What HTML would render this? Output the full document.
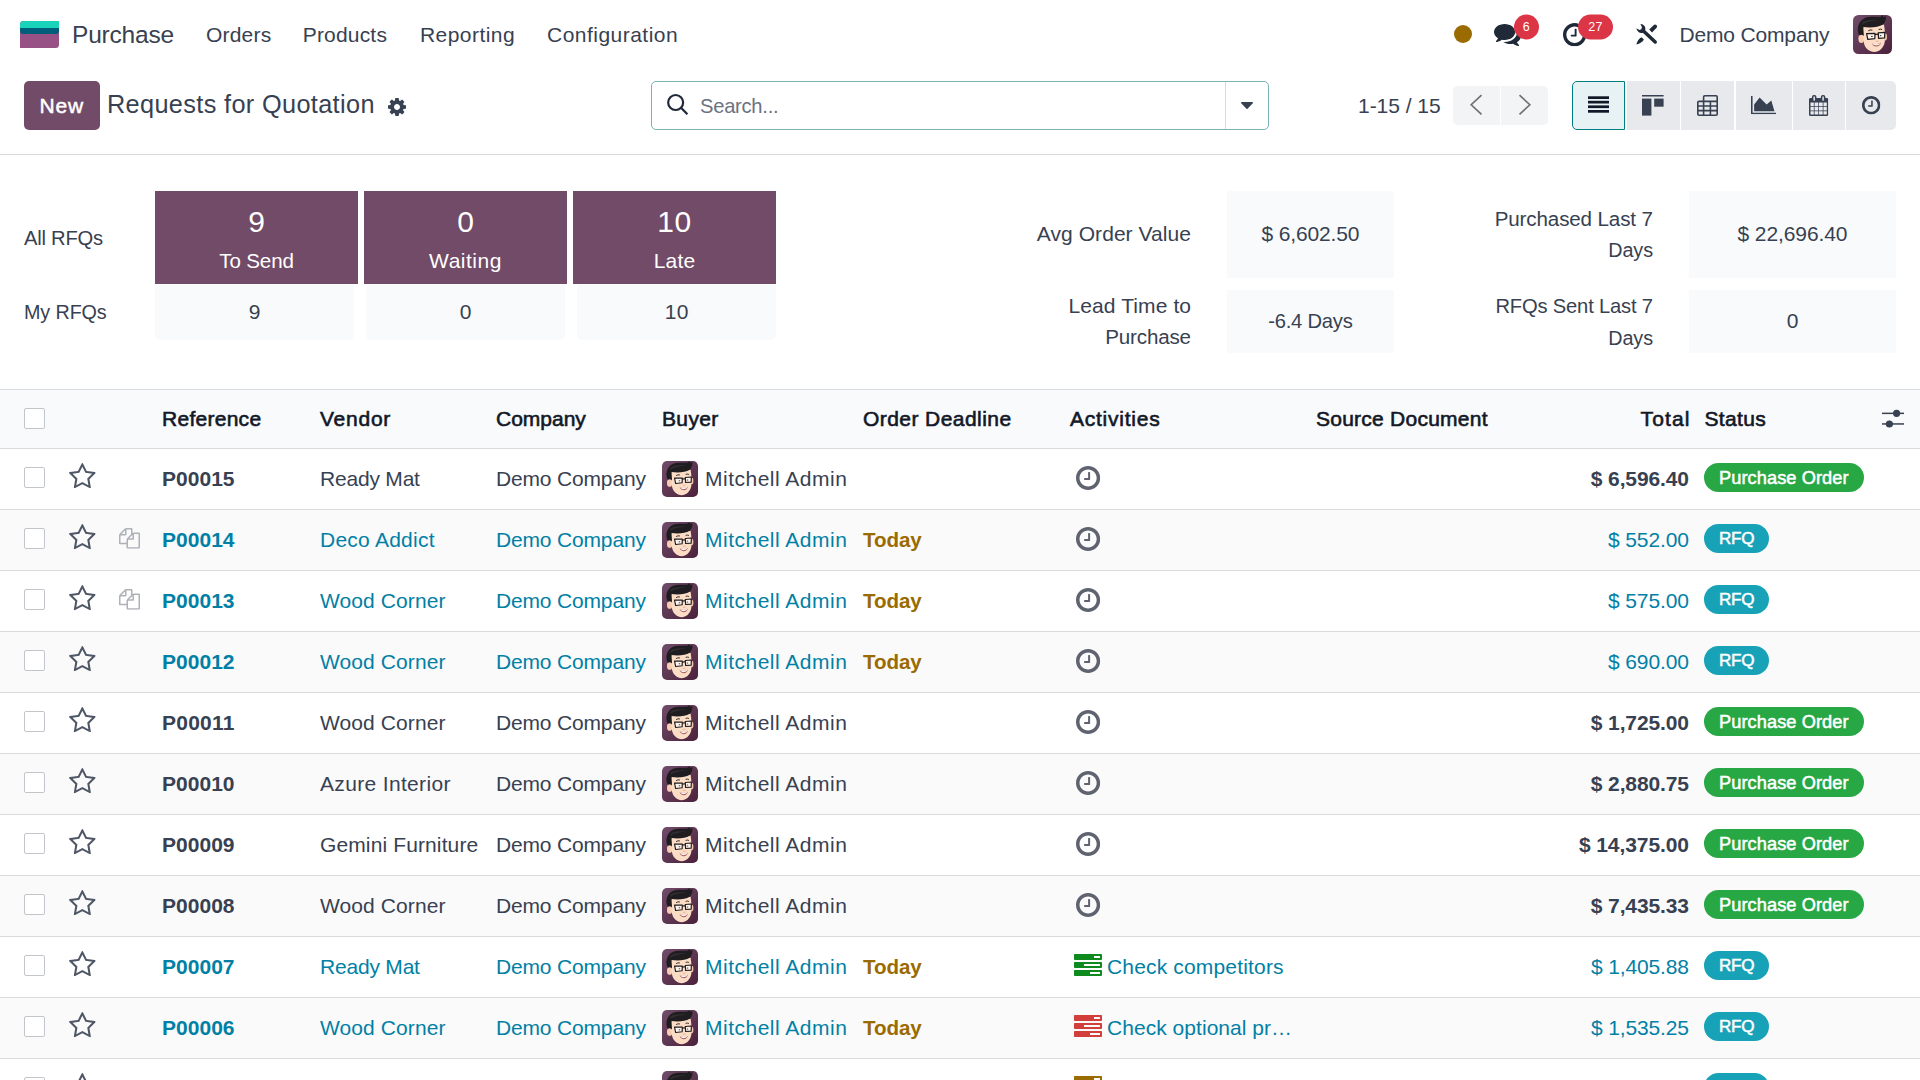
<!DOCTYPE html><html lang="en"><head><meta charset="utf-8"><title>Odoo - Requests for Quotation</title><style>
*{box-sizing:border-box;margin:0;padding:0}
html,body{width:1920px;height:1080px;overflow:hidden;background:#fff}
body{font-family:"Liberation Sans",sans-serif;font-size:21px;color:#374151;position:relative;-webkit-font-smoothing:antialiased}
.abs,.ic,nav *,.cp *,.dash *,.tr>*,.th>*{position:absolute;white-space:nowrap}
.ic{fill:currentColor;overflow:visible}
nav{position:absolute;left:0;top:0;width:1920px;height:69px;background:#fff}
nav .t{line-height:69px;top:0}
.brand{left:72px;font-size:25px;top:0!important}
.badge{background:#dc3545;color:#fff;border-radius:13px;height:25px;top:14px;font-size:12.5px;line-height:25px;transform:translateY(0.5px);text-align:center;font-weight:500}
.cp{position:absolute;left:0;top:69px;width:1920px;height:86px;border-bottom:1px solid #d8dadd}
.btn-new{left:24px;top:12px;width:75.5px;height:48.5px;background:#714b67;border-radius:5px;color:#fff;text-align:center;line-height:49px;font-weight:400;-webkit-text-stroke:0.5px #fff}
.title{left:107px;top:10px;line-height:50px;font-size:25.3px}
.search{left:651px;top:12px;width:618px;height:48.5px;border:1.5px solid #78b2b8;border-radius:5px}
.search .sep{left:572.5px;top:0;width:1px;height:47px;background:#d8dadd}
.search .ph{left:48px;top:0;line-height:48.5px;color:#6b7280}
.pager-t{left:1358px;top:13px;line-height:48px}
.pg{top:17px;height:39px;background:#f3f4f6}
.vb{top:12px;height:49px;background:#e7e9ed}
.dash{position:absolute;left:0;top:155px;width:1920px;height:235px;border-bottom:1px solid #d8dadd;background:#fff}
.card{background:#714b67;color:#fff;top:36px;width:203px;height:93px;text-align:center}
.card .n{left:0;width:203px;top:9px;font-size:30px;line-height:44px}
.card .l{left:0;width:203px;top:52.7px;line-height:34px}
.my{background:#f9fafb;top:130px;width:199px;height:55px;border-radius:0 0 5px 5px;text-align:center;line-height:54px}
.kv{background:#f9fafb;text-align:center}
.kl{text-align:right;line-height:31.2px}
.list{position:absolute;left:0;top:390px;width:1920px}
.th{position:relative;height:59px;background:#f9fafb;border-bottom:1px solid #d8dadd;color:#111827;font-weight:400;line-height:58px}
.th>span{top:0;-webkit-text-stroke:0.6px #111827;}
.tr{position:relative;height:61px;border-bottom:1px solid #d8dadd;line-height:60px}
.tr:nth-child(odd){background:#fafafb}
.tr>span{top:0}
.tr.i,.tr.i a{color:#0180a5}
.cb{left:24px;top:18px;width:21px;height:21px;border:1px solid #c2c5ca;border-radius:2px;background:#fff}
.c-ref{left:162px;font-weight:700}
.c-ven{left:320px}
.c-com{left:496px}
.c-av{left:662px;top:12px;width:36px;height:36px}
.c-buy{left:705px}
.c-dl{left:863px;font-weight:700;color:#9a6b01}
.c-act{left:1107px;color:#0180a5}
.c-tot{right:231px}
.b .c-tot{font-weight:700}
.st{left:1704px;top:14px!important;height:29px;border-radius:15px;color:#fff;font-size:18.2px;font-weight:400;line-height:30.5px;padding:0 15px;-webkit-text-stroke:0.5px #fff;}
.st.po{background:#28a745}
.st.rfq{background:#17a2b8}
</style></head><body>
<svg width="0" height="0" style="position:absolute"><defs><symbol id="fa-star-o" viewBox="0 -1504 1664 1587" preserveAspectRatio="none"><path transform="scale(1,-1)" d="M1137 532 1209 111 832 310 454 111 527 532 221 829 643 891 832 1273 1021 891 1443 829ZM1664 889C1664 919 1632 931 1608 935L1106 1008L881 1463C872 1482 855 1504 832 1504C809 1504 792 1482 783 1463L558 1008L56 935C31 931 0 919 0 889C0 871 13 854 25 841L389 487L303 -13C302 -20 301 -26 301 -33C301 -59 314 -83 343 -83C357 -83 370 -78 383 -71L832 165L1281 -71C1293 -78 1307 -83 1321 -83C1350 -83 1362 -60 1362 -33C1362 -26 1362 -20 1361 -13L1275 487L1638 841C1651 854 1664 871 1664 889Z"/></symbol><symbol id="fa-files-o" viewBox="0 -1536 1792 1792" preserveAspectRatio="none"><path transform="scale(1,-1)" d="M1696 1152H1280C1241 1152 1191 1135 1152 1112V1440C1152 1493 1109 1536 1056 1536H640C587 1536 513 1505 476 1468L68 1060C31 1023 0 949 0 896V224C0 171 43 128 96 128H640V-160C640 -213 683 -256 736 -256H1696C1749 -256 1792 -213 1792 -160V1056C1792 1109 1749 1152 1696 1152ZM1152 939V640H853ZM512 1323V1024H213ZM708 676C671 639 640 565 640 512V256H128V896H544C597 896 640 939 640 992V1408H1024V992ZM1664 -128H768V512H1184C1237 512 1280 555 1280 608V1024H1664Z"/></symbol><symbol id="fa-clock-o" viewBox="0 -1408 1536 1536" preserveAspectRatio="none"><path transform="scale(1,-1)" d="M896 992C896 1010 882 1024 864 1024H800C782 1024 768 1010 768 992V640H544C526 640 512 626 512 608V544C512 526 526 512 544 512H864C882 512 896 526 896 544ZM1312 640C1312 340 1068 96 768 96C468 96 224 340 224 640C224 940 468 1184 768 1184C1068 1184 1312 940 1312 640ZM1536 640C1536 1064 1192 1408 768 1408C344 1408 0 1064 0 640C0 216 344 -128 768 -128C1192 -128 1536 216 1536 640Z"/></symbol><symbol id="fa-comments" viewBox="0 -1280 1792 1408" preserveAspectRatio="none"><path transform="scale(1,-1)" d="M1408 768C1408 1051 1093 1280 704 1280C315 1280 0 1051 0 768C0 606 104 461 266 367C232 284 188 245 149 201C138 188 125 176 129 157C129 157 129 157 129 157C132 140 146 128 161 128C162 128 163 128 164 128C194 132 223 137 250 144C351 170 445 213 528 272C584 262 643 256 704 256C1093 256 1408 485 1408 768ZM1792 512C1792 679 1682 827 1513 920C1528 871 1536 820 1536 768C1536 589 1444 424 1277 302C1122 190 919 128 704 128C675 128 645 130 616 132C741 50 907 0 1088 0C1149 0 1208 6 1264 16C1347 -43 1441 -86 1542 -112C1569 -119 1598 -124 1628 -128C1644 -130 1659 -117 1663 -99C1663 -99 1663 -99 1663 -99C1667 -80 1654 -68 1643 -55C1604 -11 1560 28 1526 111C1688 205 1792 349 1792 512Z"/></symbol><symbol id="fa-search" viewBox="0 -1408 1664 1664" preserveAspectRatio="none"><path transform="scale(1,-1)" d="M1152 704C1152 457 951 256 704 256C457 256 256 457 256 704C256 951 457 1152 704 1152C951 1152 1152 951 1152 704ZM1664 -128C1664 -94 1650 -61 1627 -38L1284 305C1365 422 1408 562 1408 704C1408 1093 1093 1408 704 1408C315 1408 0 1093 0 704C0 315 315 0 704 0C846 0 986 43 1103 124L1446 -218C1469 -242 1502 -256 1536 -256C1606 -256 1664 -198 1664 -128Z"/></symbol><symbol id="fa-cog" viewBox="0 -1408 1536 1536" preserveAspectRatio="none"><path transform="scale(1,-1)" d="M1024 640C1024 499 909 384 768 384C627 384 512 499 512 640C512 781 627 896 768 896C909 896 1024 781 1024 640ZM1536 749C1536 766 1524 782 1507 785L1324 813C1314 846 1300 879 1283 911C1317 958 1354 1002 1388 1048C1393 1055 1396 1062 1396 1071C1396 1079 1394 1087 1389 1093C1347 1152 1277 1214 1224 1263C1217 1269 1208 1273 1199 1273C1190 1273 1181 1270 1175 1264L1033 1157C1004 1172 974 1184 943 1194L915 1378C913 1395 897 1408 879 1408H657C639 1408 625 1396 621 1380C605 1320 599 1255 592 1194C561 1184 530 1171 501 1156L363 1263C355 1269 346 1273 337 1273C303 1273 168 1127 144 1094C139 1087 135 1080 135 1071C135 1062 139 1054 145 1047C182 1002 218 957 252 909C236 879 223 849 213 817L27 789C12 786 0 768 0 753V531C0 514 12 498 29 495L212 468C222 434 236 401 253 369C219 322 182 278 148 232C143 225 140 218 140 209C140 201 142 193 147 186C189 128 259 66 312 18C319 11 328 7 337 7C346 7 355 10 362 16L503 123C532 108 562 96 593 86L621 -98C623 -115 639 -128 657 -128H879C897 -128 911 -116 915 -100C931 -40 937 25 944 86C975 96 1006 109 1035 124L1173 16C1181 11 1190 7 1199 7C1233 7 1368 154 1392 186C1398 193 1401 200 1401 209C1401 218 1397 227 1391 234C1354 279 1318 323 1284 372C1300 401 1312 431 1323 463L1508 491C1524 494 1536 512 1536 527Z"/></symbol><symbol id="fa-caret-down" viewBox="0 -896 1024 576" preserveAspectRatio="none"><path transform="scale(1,-1)" d="M1024 832C1024 867 995 896 960 896H64C29 896 0 867 0 832C0 815 7 799 19 787L467 339C479 327 495 320 512 320C529 320 545 327 557 339L1005 787C1017 799 1024 815 1024 832Z"/></symbol><symbol id="fa-tasks" viewBox="0 -1408 1792 1408" preserveAspectRatio="none"><path transform="scale(1,-1)" d="M1024 128V256H1664V128ZM640 640V768H1664V640ZM1280 1152V1280H1664V1152ZM1792 320C1792 355 1763 384 1728 384H64C29 384 0 355 0 320V64C0 29 29 0 64 0H1728C1763 0 1792 29 1792 64ZM1792 832C1792 867 1763 896 1728 896H64C29 896 0 867 0 832V576C0 541 29 512 64 512H1728C1763 512 1792 541 1792 576ZM1792 1344C1792 1379 1763 1408 1728 1408H64C29 1408 0 1379 0 1344V1088C0 1053 29 1024 64 1024H1728C1763 1024 1792 1053 1792 1088Z"/></symbol><symbol id="fa-area-chart" viewBox="0 -1408 2048 1536" preserveAspectRatio="none"><path transform="scale(1,-1)" d="M2048 0H128V1408H0V-128H2048ZM1664 1024 1280 704 704 1280 256 704V128H1920Z"/></symbol><symbol id="fa-calendar" viewBox="0 -1536 1664 1792" preserveAspectRatio="none"><path transform="scale(1,-1)" d="M128 -128V160H416V-128ZM480 -128V160H800V-128ZM128 224V544H416V224ZM480 224V544H800V224ZM128 608V896H416V608ZM864 -128V160H1184V-128ZM480 608V896H800V608ZM1248 -128V160H1536V-128ZM864 224V544H1184V224ZM512 1088C512 1071 497 1056 480 1056H416C399 1056 384 1071 384 1088V1376C384 1393 399 1408 416 1408H480C497 1408 512 1393 512 1376V1088ZM1248 224V544H1536V224ZM864 608V896H1184V608ZM1248 608V896H1536V608ZM1280 1088C1280 1071 1265 1056 1248 1056H1184C1167 1056 1152 1071 1152 1088V1376C1152 1393 1167 1408 1184 1408H1248C1265 1408 1280 1393 1280 1376V1088ZM1664 1152C1664 1222 1606 1280 1536 1280H1408V1376C1408 1464 1336 1536 1248 1536H1184C1096 1536 1024 1464 1024 1376V1280H640V1376C640 1464 568 1536 480 1536H416C328 1536 256 1464 256 1376V1280H128C58 1280 0 1222 0 1152V-128C0 -198 58 -256 128 -256H1536C1606 -256 1664 -198 1664 -128Z"/></symbol><symbol id="av" viewBox="0 0 39 39">
<defs><linearGradient id="avg" x1="0" y1="0" x2="1" y2="1"><stop offset="0" stop-color="#714d6b"/><stop offset="1" stop-color="#4b213b"/></linearGradient>
<clipPath id="avc"><rect width="39" height="39" rx="5.5"/></clipPath></defs>
<g clip-path="url(#avc)"><rect width="39" height="39" fill="url(#avg)"/>
<ellipse cx="8.3" cy="23.8" rx="2.9" ry="4.2" fill="#f6cdb3"/>
<ellipse cx="32.3" cy="21.8" rx="1.7" ry="3.6" fill="#f1c3a8"/>
<path d="M9.8 12 L31 9.5 C31.8 15 32.6 22 31.7 27 C30.8 33 26 37 21.3 37 C16.4 37 12 33.5 10.9 28 C10 23 9.8 17 9.8 12Z" fill="#fbdcc5"/>
<path d="M5 16.5 C4.2 11.5 6.2 6.2 11 3.4 C14.5 1.6 20 1.6 27.2 2 L29.6 0.2 L30.2 2 L33 1.4 C33.2 4.5 32 7.6 30 9.6 C25.5 12.4 17 13 10.4 12 C10.2 15.5 11 18.8 10.8 21 C9.6 19.6 7.8 19.2 6.4 20.4 C5.6 19.4 5.2 18 5 16.5Z" fill="#1f1d20"/><path d="M9 7.4 C13 4.6 20 4.2 27 5.2 C21 5.4 14 6.2 9.6 9.4Z" fill="#39363a" opacity=".7"/>
<path d="M15.6 15.6 Q17.3 14.4 19 15" stroke="#2a2326" stroke-width="1" fill="none" stroke-linecap="round"/>
<path d="M26 14.4 Q27.4 13.6 28.8 14.4" stroke="#2a2326" stroke-width="1" fill="none" stroke-linecap="round"/>
<path d="M13.6 18.6 L22 18.4 L21.8 23.6 L14.8 24.4Z" fill="#fff4ec" stroke="#1d1b1e" stroke-width="1.25" stroke-linejoin="round"/>
<path d="M25.2 17.9 L31.8 17.3 L31.6 22.9 L25.6 23.3Z" fill="#fff4ec" stroke="#1d1b1e" stroke-width="1.25" stroke-linejoin="round"/>
<path d="M22 19.6 L25.2 19.2" stroke="#1d1b1e" stroke-width="1.3"/>
<ellipse cx="18.9" cy="21.4" rx="0.9" ry="0.6" fill="#3a3034"/><ellipse cx="27.6" cy="20.6" rx="0.9" ry="0.6" fill="#3a3034"/>
<path d="M22.8 26.2 Q24 26.8 25.6 26" stroke="#e7a995" stroke-width="0.9" fill="none"/>
<path d="M19 28.4 Q23.5 30.2 28 27.8 Q26.6 31.8 23 31.6 Q20.2 31.4 19 28.4Z" fill="#a8565a"/><path d="M19.4 28.5 Q23.5 30.2 27.7 28 Q26.8 30.3 23.2 30.5 Q20.6 30.4 19.4 28.5Z" fill="#fff"/>
</g></symbol></defs></svg>
<nav>
<div class="appicon" style="left:20px;top:21px;width:39px;height:27px;border-radius:3.5px 0 3.5px 0;overflow:hidden;background:#985184"><i style="left:0;top:0;width:39px;height:7px;background:#1ad3bb"></i><i style="left:0;top:6.5px;width:39px;height:6.5px;background:#005e7a;border-radius:0 0 3px 3px"></i></div>
<span class="t brand" style="font-size:24.50px;letter-spacing:-0.205px;margin-right:0.205px;">Purchase</span>
<span class="t" style="letter-spacing:0.200px;margin-right:-0.200px;left:206px">Orders</span>
<span class="t" style="letter-spacing:0.190px;margin-right:-0.190px;left:302.7px">Products</span>
<span class="t" style="letter-spacing:0.441px;margin-right:-0.441px;left:420px">Reporting</span>
<span class="t" style="letter-spacing:0.479px;margin-right:-0.479px;left:547px">Configuration</span>
<i style="left:1454px;top:25.3px;width:18px;height:18px;border-radius:50%;background:#9a6b01"></i>
<svg class="ic" style="left:1494.4px;top:24px;width:27px;height:22px;color:#1f2937;"><use href="#fa-comments"/></svg>
<span class="badge" style="left:1513.5px;width:25.5px">6</span>
<svg class="ic" style="left:1563px;top:22.6px;width:23.3px;height:23.3px;color:#1f2937;"><use href="#fa-clock-o"/></svg>
<span class="badge" style="letter-spacing:0.203px;margin-right:-0.203px;left:1578px;width:35px">27</span>
<svg class="ic" style="left:1636px;top:24px;width:22px;height:21px;color:#1f2937" viewBox="0 0 22 21"><path d="M7.2 6.8 L19.2 18" stroke="currentColor" stroke-width="3.5" stroke-linecap="round" fill="none"/><path d="M4.4 0.1 A4.9 4.9 0 0 1 9.2 6.6 L6.8 8.8 A4.9 4.9 0 0 1 0.5 4.2 L3.4 6 L5.4 5.2 L5.9 3 Z"/><path d="M13.2 5.6 L17.6 1.2 A1.9 1.9 0 0 1 20.6 3.8 L16 8.6Z"/><path d="M5.4 13.2 L7.9 15.6 C6.6 18 4 19.6 0.4 20.6 C1 17.4 2.8 14.6 5.4 13.2Z"/></svg>
<span class="t" style="letter-spacing:-0.165px;margin-right:0.165px;left:1679.5px">Demo Company</span>
<svg class="ic" style="left:1853px;top:15px;width:39px;height:39px"><use href="#av"/></svg>
</nav>
<div class="cp">
<span class="btn-new" style="letter-spacing:0.806px;margin-right:-0.806px;">New</span>
<span class="title" style="letter-spacing:0.348px;margin-right:-0.348px;">Requests for Quotation</span>
<svg class="ic" style="left:388px;top:28.5px;width:18px;height:18px;color:#374151;"><use href="#fa-cog"/></svg>
<div class="search"><svg class="ic" style="left:14.5px;top:12.3px;width:21.5px;height:21px" viewBox="0 0 21.5 21"><circle cx="8.65" cy="8.5" r="7.5" fill="none" stroke="#1f2937" stroke-width="2.2"/><path d="M14 13.8 L20.4 20.2" stroke="#1f2937" stroke-width="2.3" fill="none"/></svg><span class="ph" style="font-size:20.16px;letter-spacing:-0.260px;margin-right:0.260px;">Search...</span><i class="sep"></i><svg class="ic" style="left:588.5px;top:20px;width:12px;height:7px;color:#374151;"><use href="#fa-caret-down"/></svg></div>
<span class="pager-t" style="letter-spacing:-0.033px;margin-right:0.033px;">1-15 / 15</span>
<div class="pg" style="left:1453px;width:47px;border-radius:5px 0 0 5px"><svg class="ic" style="left:16px;top:8.2px;width:14px;height:21.5px" viewBox="0 0 14 21.5"><path d="M12.5 1.1 L2.2 10.75 L12.5 20.4" fill="none" stroke="#717171" stroke-width="1.7"/></svg></div>
<div class="pg" style="left:1501px;width:47px;border-radius:0 5px 5px 0"><svg class="ic" style="left:17px;top:8.2px;width:14px;height:21.5px" viewBox="0 0 14 21.5"><path d="M1.5 1.1 L11.8 10.75 L1.5 20.4" fill="none" stroke="#717171" stroke-width="1.7"/></svg></div>
<div class="vb" style="left:1572px;width:53px;background:#e6f2f3;border:1.5px solid #017e84;border-radius:5px 0 0 5px"><svg class="ic" style="left:14.5px;top:14px;width:21px;height:17px;color:#111827" viewBox="0 0 21 17"><rect y="0.3" width="21" height="2.7"/><rect y="4.8" width="21" height="2.7"/><rect y="9.4" width="21" height="2.7"/><rect y="14" width="21" height="2.7"/></svg></div>
<div class="vb" style="left:1627px;width:53px"><svg class="ic" style="left:15.3px;top:14px;width:22px;height:21px;color:#374151" viewBox="0 0 22 21"><rect y="0" width="21.6" height="1.5"/><rect y="3.6" width="9.4" height="17"/><rect x="12.2" y="3.6" width="9.4" height="8.1"/></svg></div>
<div class="vb" style="left:1681px;width:53px"><svg class="ic" style="left:16px;top:14px;width:21px;height:21px;color:#374151" viewBox="0 0 21 21"><g fill="none" stroke="currentColor" stroke-width="1.6"><path d="M6.6 6.4 V2 Q6.6 0.8 7.8 0.8 H19 Q20.2 0.8 20.2 2 V19 Q20.2 20.2 19 20.2 H2 Q0.8 20.2 0.8 19 V7.6 Q0.8 6.4 2 6.4 H20.2"/><path d="M0.8 11 H20.2 M0.8 15.6 H20.2 M6.6 6.4 V20.2 M13.4 6.4 V20.2"/></g></svg></div>
<div class="vb" style="left:1736px;width:56px"><svg class="ic" style="left:15px;top:15.3px;width:25px;height:18.3px;color:#374151;"><use href="#fa-area-chart"/></svg></div>
<div class="vb" style="left:1793px;width:52px"><svg class="ic" style="left:16.2px;top:14px;width:19.3px;height:21px;color:#374151;"><use href="#fa-calendar"/></svg></div>
<div class="vb" style="left:1846px;width:50px;border-radius:0 5px 5px 0"><svg class="ic" style="left:15.7px;top:15.3px;width:18.4px;height:18.4px;color:#374151;"><use href="#fa-clock-o"/></svg></div>
</div>
<div class="dash">
<span style="font-size:20.16px;letter-spacing:-0.230px;margin-right:0.230px;left:24px;top:66px;line-height:34px">All RFQs</span>
<span style="font-size:19.74px;letter-spacing:-0.099px;margin-right:0.099px;left:24px;top:140px;line-height:34px">My RFQs</span>
<div class="card" style="left:155px"><span class="n">9</span><span class="l" style="font-size:20.58px;letter-spacing:-0.146px;margin-right:0.146px;">To Send</span></div>
<div class="my" style="left:155px"><span style="position:static">9</span></div>
<div class="card" style="left:364px"><span class="n">0</span><span class="l" style="letter-spacing:0.513px;margin-right:-0.513px;">Waiting</span></div>
<div class="my" style="left:366px"><span style="position:static">0</span></div>
<div class="card" style="left:573px"><span class="n" style="letter-spacing:0.469px;margin-right:-0.469px;">10</span><span class="l" style="letter-spacing:0.146px;margin-right:-0.146px;">Late</span></div>
<div class="my" style="left:577px"><span style="letter-spacing:0.344px;margin-right:-0.344px;position:static">10</span></div>
<div class="kl" style="right:729px;top:63px"><span style="letter-spacing:0.064px;margin-right:-0.064px;position:static">Avg Order Value</span></div>
<div class="kv" style="left:1227px;top:36px;width:167px;height:87px;line-height:86px"><span style="letter-spacing:-0.134px;margin-right:0.134px;position:static">$ 6,602.50</span></div>
<div class="kl" style="right:729px;top:135px"><span style="letter-spacing:0.094px;margin-right:-0.094px;position:static">Lead Time to</span><br><span style="font-size:20.58px;letter-spacing:-0.170px;margin-right:0.170px;position:static">Purchase</span></div>
<div class="kv" style="left:1227px;top:135px;width:167px;height:63px;line-height:62px"><span style="font-size:20.16px;letter-spacing:-0.211px;margin-right:0.211px;position:static">-6.4 Days</span></div>
<div class="kl" style="right:267px;top:48px"><span style="font-size:20.58px;letter-spacing:-0.119px;margin-right:0.119px;position:static">Purchased Last 7</span><br><span style="font-size:19.74px;letter-spacing:-0.042px;margin-right:0.042px;position:static">Days</span></div>
<div class="kv" style="left:1689px;top:36px;width:207px;height:87px;line-height:86px"><span style="letter-spacing:-0.103px;margin-right:0.103px;position:static">$ 22,696.40</span></div>
<div class="kl" style="right:267px;top:135px"><span style="font-size:20.16px;letter-spacing:-0.178px;margin-right:0.178px;position:static">RFQs Sent Last 7</span><br><span style="font-size:19.74px;letter-spacing:-0.042px;margin-right:0.042px;position:static">Days</span></div>
<div class="kv" style="left:1689px;top:135px;width:207px;height:63px;line-height:62px"><span style="position:static">0</span></div>
</div>
<div class="list">
<div class="th"><i class="cb"></i>
<span style="letter-spacing:0.272px;margin-right:-0.272px;left:162px">Reference</span>
<span style="letter-spacing:0.756px;margin-right:-0.756px;left:320px">Vendor</span>
<span style="letter-spacing:-0.005px;margin-right:0.005px;left:496px">Company</span>
<span style="letter-spacing:0.357px;margin-right:-0.357px;left:662px">Buyer</span>
<span style="letter-spacing:0.435px;margin-right:-0.435px;left:863px">Order Deadline</span>
<span style="letter-spacing:0.758px;margin-right:-0.758px;left:1070px">Activities</span>
<span style="letter-spacing:0.245px;margin-right:-0.245px;left:1316px">Source Document</span>
<span style="letter-spacing:1.139px;margin-right:-1.139px;right:230.5px">Total</span>
<span style="letter-spacing:0.365px;margin-right:-0.365px;left:1704.5px">Status</span>
<svg class="ic" style="left:1882px;top:19px;width:22px;height:19px;color:#374151" viewBox="0 0 22 19"><rect y="3.6" width="22" height="1.5"/><rect y="14.2" width="22" height="1.5"/><circle cx="14.6" cy="4.3" r="3.6"/><circle cx="7.4" cy="15" r="3.6"/></svg>
</div>
<div class="tr b"><i class="cb"></i>
<svg class="ic" style="left:69.1px;top:14px;width:26.7px;height:25.3px;color:#4f5766;"><use href="#fa-star-o"/></svg>
<span class="c-ref" style="letter-spacing:0.022px;margin-right:-0.022px;">P00015</span>
<span class="c-ven" style="letter-spacing:-0.199px;margin-right:0.199px;">Ready Mat</span>
<span class="c-com" style="letter-spacing:-0.165px;margin-right:0.165px;">Demo Company</span>
<svg class="ic c-av"><use href="#av"/></svg>
<span class="c-buy" style="letter-spacing:0.498px;margin-right:-0.498px;">Mitchell Admin</span>
<svg class="ic" style="left:1076.1px;top:17.1px;width:24.2px;height:24px;color:#5f6370;"><use href="#fa-clock-o"/></svg>
<span class="c-tot" style="letter-spacing:-0.116px;margin-right:0.116px;">$ 6,596.40</span>
<span class="st po" style="letter-spacing:0.088px;margin-right:-0.088px;">Purchase Order</span>
</div>
<div class="tr i"><i class="cb"></i>
<svg class="ic" style="left:69.1px;top:14px;width:26.7px;height:25.3px;color:#4f5766;"><use href="#fa-star-o"/></svg>
<svg class="ic" style="left:118.8px;top:18.1px;width:21px;height:20.7px;color:#aeb1b8;"><use href="#fa-files-o"/></svg>
<span class="c-ref" style="letter-spacing:0.022px;margin-right:-0.022px;">P00014</span>
<span class="c-ven" style="letter-spacing:0.247px;margin-right:-0.247px;">Deco Addict</span>
<span class="c-com" style="letter-spacing:-0.165px;margin-right:0.165px;">Demo Company</span>
<svg class="ic c-av"><use href="#av"/></svg>
<span class="c-buy" style="letter-spacing:0.498px;margin-right:-0.498px;">Mitchell Admin</span>
<span class="c-dl" style="font-size:20.58px;letter-spacing:-0.086px;margin-right:0.086px;">Today</span>
<svg class="ic" style="left:1076.1px;top:17.1px;width:24.2px;height:24px;color:#5f6370;"><use href="#fa-clock-o"/></svg>
<span class="c-tot" style="letter-spacing:-0.100px;margin-right:0.100px;">$ 552.00</span>
<span class="st rfq" style="font-size:17.11px;letter-spacing:-0.242px;margin-right:0.242px;">RFQ</span>
</div>
<div class="tr i"><i class="cb"></i>
<svg class="ic" style="left:69.1px;top:14px;width:26.7px;height:25.3px;color:#4f5766;"><use href="#fa-star-o"/></svg>
<svg class="ic" style="left:118.8px;top:18.1px;width:21px;height:20.7px;color:#aeb1b8;"><use href="#fa-files-o"/></svg>
<span class="c-ref" style="letter-spacing:0.022px;margin-right:-0.022px;">P00013</span>
<span class="c-ven" style="letter-spacing:0.091px;margin-right:-0.091px;">Wood Corner</span>
<span class="c-com" style="letter-spacing:-0.165px;margin-right:0.165px;">Demo Company</span>
<svg class="ic c-av"><use href="#av"/></svg>
<span class="c-buy" style="letter-spacing:0.498px;margin-right:-0.498px;">Mitchell Admin</span>
<span class="c-dl" style="font-size:20.58px;letter-spacing:-0.086px;margin-right:0.086px;">Today</span>
<svg class="ic" style="left:1076.1px;top:17.1px;width:24.2px;height:24px;color:#5f6370;"><use href="#fa-clock-o"/></svg>
<span class="c-tot" style="letter-spacing:-0.100px;margin-right:0.100px;">$ 575.00</span>
<span class="st rfq" style="font-size:17.11px;letter-spacing:-0.242px;margin-right:0.242px;">RFQ</span>
</div>
<div class="tr i"><i class="cb"></i>
<svg class="ic" style="left:69.1px;top:14px;width:26.7px;height:25.3px;color:#4f5766;"><use href="#fa-star-o"/></svg>
<span class="c-ref" style="letter-spacing:0.022px;margin-right:-0.022px;">P00012</span>
<span class="c-ven" style="letter-spacing:0.091px;margin-right:-0.091px;">Wood Corner</span>
<span class="c-com" style="letter-spacing:-0.165px;margin-right:0.165px;">Demo Company</span>
<svg class="ic c-av"><use href="#av"/></svg>
<span class="c-buy" style="letter-spacing:0.498px;margin-right:-0.498px;">Mitchell Admin</span>
<span class="c-dl" style="font-size:20.58px;letter-spacing:-0.086px;margin-right:0.086px;">Today</span>
<svg class="ic" style="left:1076.1px;top:17.1px;width:24.2px;height:24px;color:#5f6370;"><use href="#fa-clock-o"/></svg>
<span class="c-tot" style="letter-spacing:-0.100px;margin-right:0.100px;">$ 690.00</span>
<span class="st rfq" style="font-size:17.11px;letter-spacing:-0.242px;margin-right:0.242px;">RFQ</span>
</div>
<div class="tr b"><i class="cb"></i>
<svg class="ic" style="left:69.1px;top:14px;width:26.7px;height:25.3px;color:#4f5766;"><use href="#fa-star-o"/></svg>
<span class="c-ref" style="letter-spacing:0.253px;margin-right:-0.253px;">P00011</span>
<span class="c-ven" style="letter-spacing:0.091px;margin-right:-0.091px;">Wood Corner</span>
<span class="c-com" style="letter-spacing:-0.165px;margin-right:0.165px;">Demo Company</span>
<svg class="ic c-av"><use href="#av"/></svg>
<span class="c-buy" style="letter-spacing:0.498px;margin-right:-0.498px;">Mitchell Admin</span>
<svg class="ic" style="left:1076.1px;top:17.1px;width:24.2px;height:24px;color:#5f6370;"><use href="#fa-clock-o"/></svg>
<span class="c-tot" style="letter-spacing:-0.116px;margin-right:0.116px;">$ 1,725.00</span>
<span class="st po" style="letter-spacing:0.088px;margin-right:-0.088px;">Purchase Order</span>
</div>
<div class="tr b"><i class="cb"></i>
<svg class="ic" style="left:69.1px;top:14px;width:26.7px;height:25.3px;color:#4f5766;"><use href="#fa-star-o"/></svg>
<span class="c-ref" style="letter-spacing:0.022px;margin-right:-0.022px;">P00010</span>
<span class="c-ven" style="letter-spacing:0.337px;margin-right:-0.337px;">Azure Interior</span>
<span class="c-com" style="letter-spacing:-0.165px;margin-right:0.165px;">Demo Company</span>
<svg class="ic c-av"><use href="#av"/></svg>
<span class="c-buy" style="letter-spacing:0.498px;margin-right:-0.498px;">Mitchell Admin</span>
<svg class="ic" style="left:1076.1px;top:17.1px;width:24.2px;height:24px;color:#5f6370;"><use href="#fa-clock-o"/></svg>
<span class="c-tot" style="letter-spacing:-0.116px;margin-right:0.116px;">$ 2,880.75</span>
<span class="st po" style="letter-spacing:0.088px;margin-right:-0.088px;">Purchase Order</span>
</div>
<div class="tr b"><i class="cb"></i>
<svg class="ic" style="left:69.1px;top:14px;width:26.7px;height:25.3px;color:#4f5766;"><use href="#fa-star-o"/></svg>
<span class="c-ref" style="letter-spacing:0.022px;margin-right:-0.022px;">P00009</span>
<span class="c-ven" style="letter-spacing:0.121px;margin-right:-0.121px;">Gemini Furniture</span>
<span class="c-com" style="letter-spacing:-0.165px;margin-right:0.165px;">Demo Company</span>
<svg class="ic c-av"><use href="#av"/></svg>
<span class="c-buy" style="letter-spacing:0.498px;margin-right:-0.498px;">Mitchell Admin</span>
<svg class="ic" style="left:1076.1px;top:17.1px;width:24.2px;height:24px;color:#5f6370;"><use href="#fa-clock-o"/></svg>
<span class="c-tot" style="letter-spacing:-0.087px;margin-right:0.087px;">$ 14,375.00</span>
<span class="st po" style="letter-spacing:0.088px;margin-right:-0.088px;">Purchase Order</span>
</div>
<div class="tr b"><i class="cb"></i>
<svg class="ic" style="left:69.1px;top:14px;width:26.7px;height:25.3px;color:#4f5766;"><use href="#fa-star-o"/></svg>
<span class="c-ref" style="letter-spacing:0.022px;margin-right:-0.022px;">P00008</span>
<span class="c-ven" style="letter-spacing:0.091px;margin-right:-0.091px;">Wood Corner</span>
<span class="c-com" style="letter-spacing:-0.165px;margin-right:0.165px;">Demo Company</span>
<svg class="ic c-av"><use href="#av"/></svg>
<span class="c-buy" style="letter-spacing:0.498px;margin-right:-0.498px;">Mitchell Admin</span>
<svg class="ic" style="left:1076.1px;top:17.1px;width:24.2px;height:24px;color:#5f6370;"><use href="#fa-clock-o"/></svg>
<span class="c-tot" style="letter-spacing:-0.116px;margin-right:0.116px;">$ 7,435.33</span>
<span class="st po" style="letter-spacing:0.088px;margin-right:-0.088px;">Purchase Order</span>
</div>
<div class="tr i"><i class="cb"></i>
<svg class="ic" style="left:69.1px;top:14px;width:26.7px;height:25.3px;color:#4f5766;"><use href="#fa-star-o"/></svg>
<span class="c-ref" style="letter-spacing:0.022px;margin-right:-0.022px;">P00007</span>
<span class="c-ven" style="letter-spacing:-0.199px;margin-right:0.199px;">Ready Mat</span>
<span class="c-com" style="letter-spacing:-0.165px;margin-right:0.165px;">Demo Company</span>
<svg class="ic c-av"><use href="#av"/></svg>
<span class="c-buy" style="letter-spacing:0.498px;margin-right:-0.498px;">Mitchell Admin</span>
<span class="c-dl" style="font-size:20.58px;letter-spacing:-0.086px;margin-right:0.086px;">Today</span>
<svg class="ic" style="left:1074px;top:17px;width:28px;height:22px;color:#0f8a1f;"><use href="#fa-tasks"/></svg>
<span class="c-act" style="letter-spacing:0.165px;margin-right:-0.165px;">Check competitors</span>
<span class="c-tot" style="letter-spacing:-0.134px;margin-right:0.134px;">$ 1,405.88</span>
<span class="st rfq" style="font-size:17.11px;letter-spacing:-0.242px;margin-right:0.242px;">RFQ</span>
</div>
<div class="tr i"><i class="cb"></i>
<svg class="ic" style="left:69.1px;top:14px;width:26.7px;height:25.3px;color:#4f5766;"><use href="#fa-star-o"/></svg>
<span class="c-ref" style="letter-spacing:0.022px;margin-right:-0.022px;">P00006</span>
<span class="c-ven" style="letter-spacing:0.091px;margin-right:-0.091px;">Wood Corner</span>
<span class="c-com" style="letter-spacing:-0.165px;margin-right:0.165px;">Demo Company</span>
<svg class="ic c-av"><use href="#av"/></svg>
<span class="c-buy" style="letter-spacing:0.498px;margin-right:-0.498px;">Mitchell Admin</span>
<span class="c-dl" style="font-size:20.58px;letter-spacing:-0.086px;margin-right:0.086px;">Today</span>
<svg class="ic" style="left:1074px;top:17px;width:28px;height:22px;color:#d23f3a;"><use href="#fa-tasks"/></svg>
<span class="c-act" style="letter-spacing:0.041px;margin-right:-0.041px;">Check optional pr…</span>
<span class="c-tot" style="letter-spacing:-0.134px;margin-right:0.134px;">$ 1,535.25</span>
<span class="st rfq" style="font-size:17.11px;letter-spacing:-0.242px;margin-right:0.242px;">RFQ</span>
</div>
<div class="tr i"><i class="cb"></i>
<svg class="ic" style="left:69.1px;top:14px;width:26.7px;height:25.3px;color:#4f5766;"><use href="#fa-star-o"/></svg>
<span class="c-ref" style="letter-spacing:0.022px;margin-right:-0.022px;">P00005</span>
<span class="c-ven" style="letter-spacing:0.247px;margin-right:-0.247px;">Deco Addict</span>
<span class="c-com" style="letter-spacing:-0.165px;margin-right:0.165px;">Demo Company</span>
<svg class="ic c-av"><use href="#av"/></svg>
<span class="c-buy" style="letter-spacing:0.498px;margin-right:-0.498px;">Mitchell Admin</span>
<span class="c-dl" style="font-size:20.58px;letter-spacing:-0.086px;margin-right:0.086px;">Today</span>
<svg class="ic" style="left:1074px;top:17px;width:28px;height:22px;color:#9a6b01;"><use href="#fa-tasks"/></svg>
<span class="c-act" style="letter-spacing:0.306px;margin-right:-0.306px;">Get quote for …</span>
<span class="c-tot" style="letter-spacing:-0.134px;margin-right:0.134px;">$ 1,335.00</span>
<span class="st rfq" style="font-size:17.11px;letter-spacing:-0.242px;margin-right:0.242px;">RFQ</span>
</div>
</div>
</body></html>
